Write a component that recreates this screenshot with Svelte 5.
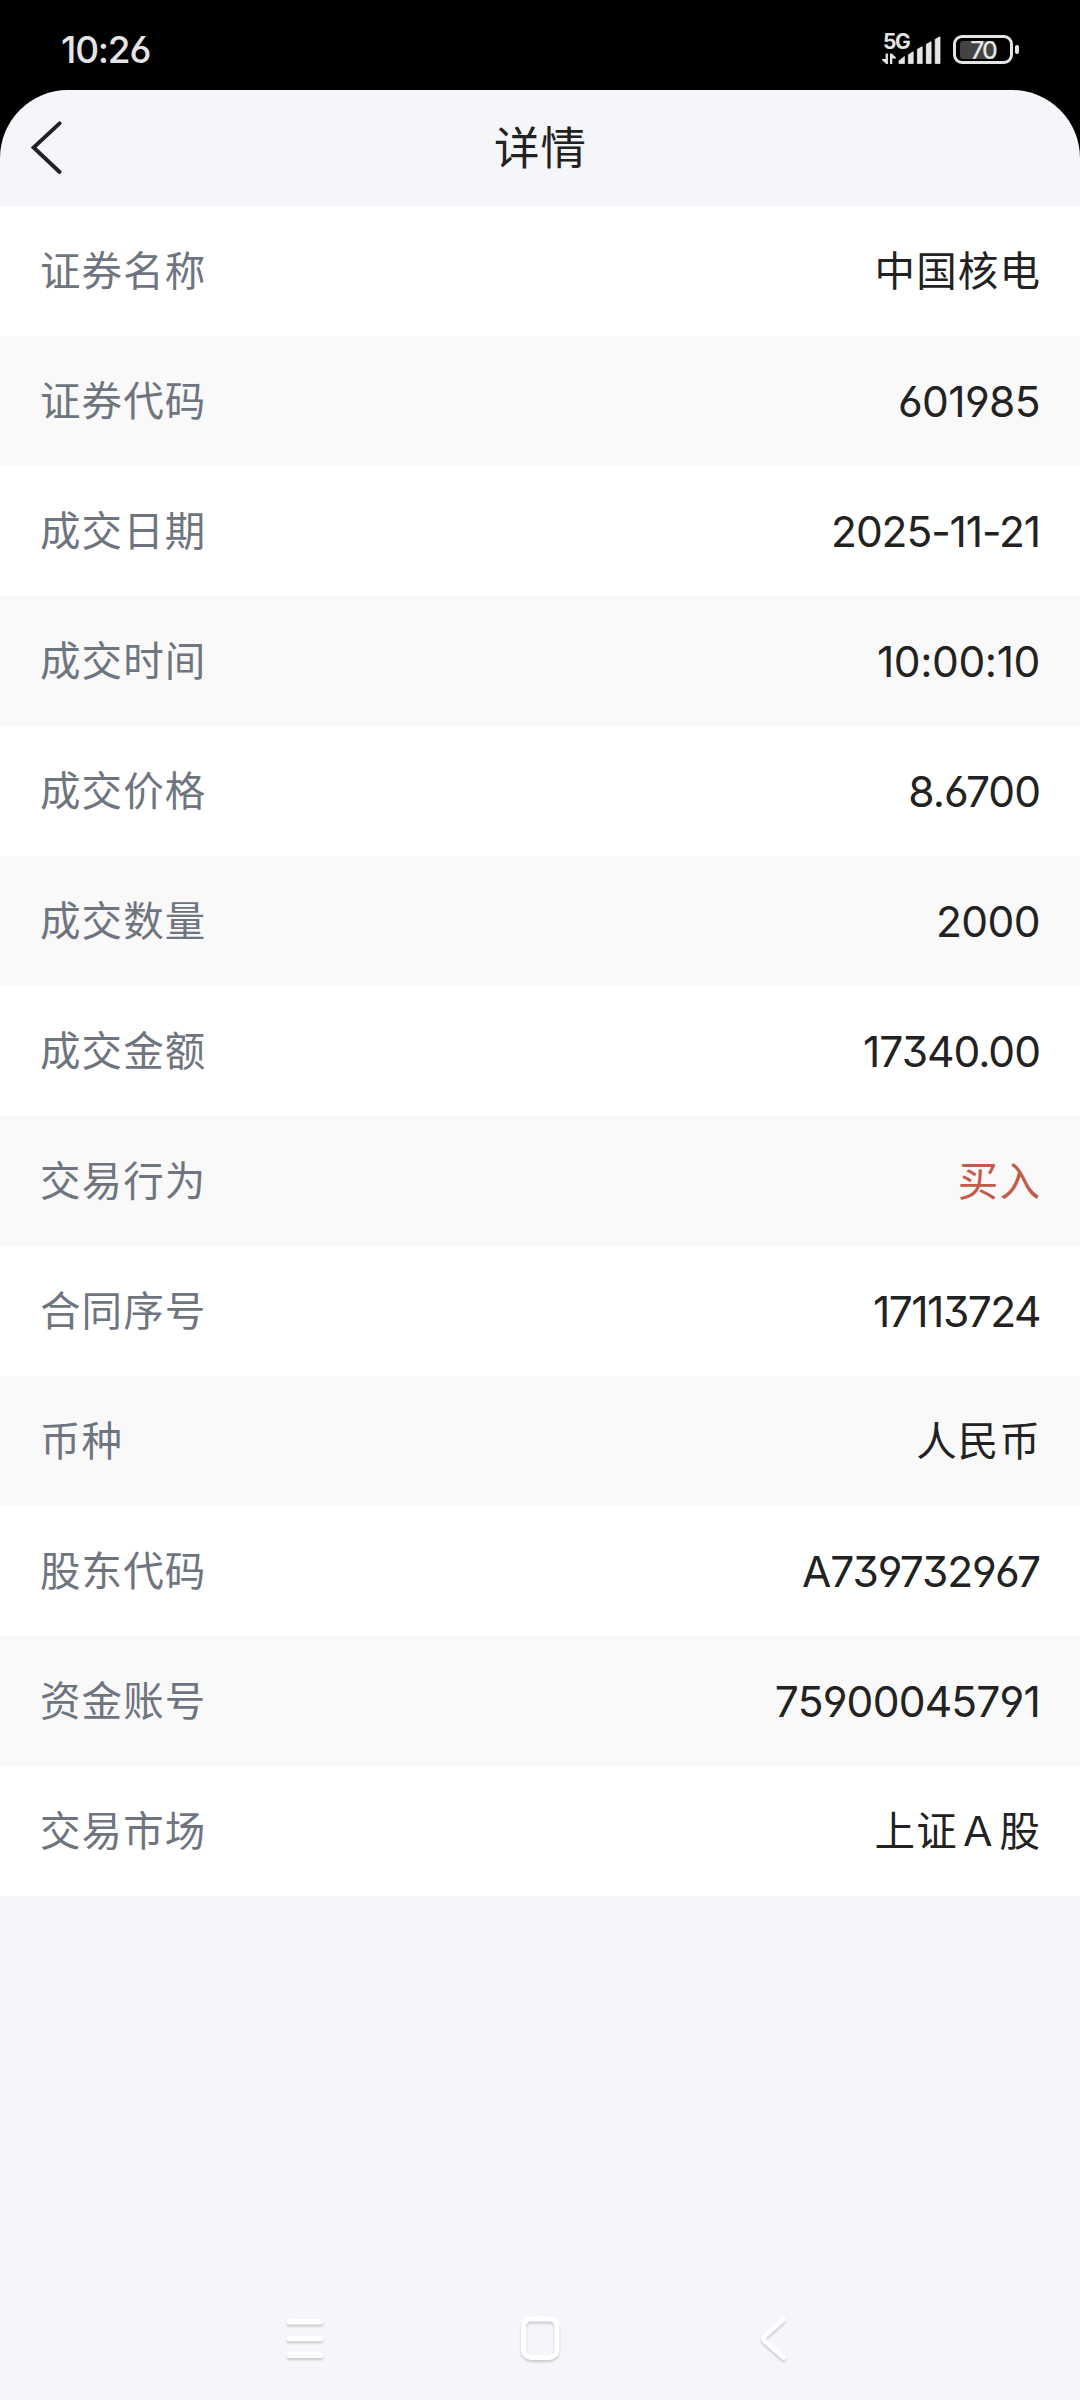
<script>
    const time = '10:26';
    const battery = 70;

    // spacing: letter spacing in px, numbers only
    const rows = [
        { label: '证券名称', value: '中国核电' },
        { label: '证券代码', value: '601985', spacing: -0.6 },
        { label: '成交日期', value: '2025-11-21', spacing: -1.1 },
        { label: '成交时间', value: '10:00:10', spacing: -0.4 },
        { label: '成交价格', value: '8.6700', spacing: -1 },
        { label: '成交数量', value: '2000', spacing: -0.6 },
        { label: '成交金额', value: '17340.00', spacing: -1 },
        { label: '交易行为', value: '买入', highlight: true },
        { label: '合同序号', value: '17113724', spacing: -1.5 },
        { label: '币种', value: '人民币' },
        { label: '股东代码', value: 'A739732967', spacing: -1.1 },
        { label: '资金账号', value: '75900045791', spacing: -0.8 },
        { label: '交易市场', value: '上证\uFF21股' }, // full-width A
    ];
</script>

<div class="screen">
    <div class="status-bar">
        <span class="time">{time}</span>
        <div class="status-icons">
            <div class="signal">
                <span class="network">5G</span>
                <svg width="60" height="30" viewBox="0 0 60 30" fill="#e4e4e4">
                    <!-- data arrows -->
                    <path d="M3.6 18.5h2.3V29H4.2L0 25v-1h3.6z" />
                    <path d="M8 18.5h1.8l4.2 4v1h-3.7V29H8z" />
                    <path d="M17 28.5v-2.6l5.4-4.5V28.5z" stroke="#e4e4e4" stroke-width=".8" stroke-linejoin="round" />
                    <path d="M26.4 28.5v-8.7l4.8-3V28.5z" stroke="#e4e4e4" stroke-width=".8" stroke-linejoin="round" />
                    <path d="M35.4 28.5V14.3l4.8-2.6V28.5z" stroke="#e4e4e4" stroke-width=".8" stroke-linejoin="round" />
                    <path d="M44.3 28.5V9.3l4.8-2.6V28.5z" stroke="#e4e4e4" stroke-width=".8" stroke-linejoin="round" />
                    <path d="M53.2 28.5V4.3l4.8-2.6V28.5z" stroke="#e4e4e4" stroke-width=".8" stroke-linejoin="round" />
                </svg>
            </div>
            <div class="battery">
                <div class="battery-level" style="width: {battery * 0.49}px"></div>
                <span class="battery-text">{battery}</span>
            </div>
            <div class="battery-tip"></div>
        </div>
    </div>

    <div class="page">
        <header class="header">
            <button class="back" aria-label="返回">
                <svg width="34" height="56" viewBox="0 0 34 56" fill="none">
                    <path d="M29.6 3.4L3.6 27.5L29.6 52" stroke="#222" stroke-width="3.9" stroke-linecap="round" />
                </svg>
            </button>
            <h1>详情</h1>
        </header>

        <div class="list">
            {#each rows as row}
                <div class="row">
                    <span class="label">{row.label}</span>
                    {#if row.spacing}
                        <span class="value number" style="letter-spacing: {row.spacing}px">{row.value}</span>
                    {:else}
                        <span class="value" class:highlight={row.highlight}>{row.value}</span>
                    {/if}
                </div>
            {/each}
        </div>

        <nav class="nav-bar">
            <svg width="48" height="56" viewBox="0 0 48 56" stroke="#fff" stroke-width="5.6" stroke-linecap="round">
                <path d="M8.5 9.7h31M8.5 26.5h31M8.5 43.2h31" />
            </svg>
            <svg width="48" height="56" viewBox="0 0 48 56" fill="none" stroke="#fff" stroke-width="5">
                <rect x="7.5" y="7" width="33.5" height="38.5" rx="7.5" />
            </svg>
            <svg width="48" height="56" viewBox="0 0 48 56" fill="none" stroke="#fff" stroke-width="4.8" stroke-linecap="round">
                <path d="M32.5 7.5L14.5 23.3Q11 26.5 14.5 29.8L32.5 45.5" />
            </svg>
        </nav>
    </div>
</div>

<style>
    :global(body) {
        margin: 0;
        background: #000;
    }

    .screen {
        width: 1080px;
        height: 2400px;
        display: flex;
        flex-direction: column;
        overflow: hidden;
        background: #000;
        font-family: Inter, "Noto Sans CJK SC", sans-serif;
    }

    .status-bar {
        height: 90px;
        flex: none;
        display: flex;
        justify-content: space-between;
        align-items: center;
        box-sizing: border-box;
        padding: 9px 61px 0;
        color: #e4e4e4;
    }

    .time {
        font-size: 37px;
        font-weight: 550;
        line-height: 1;
        letter-spacing: -1.2px;
        font-feature-settings: "cv03", "cv04";
    }

    .status-icons {
        display: flex;
        align-items: center;
    }

    .signal {
        position: relative;
        width: 60px;
        height: 30px;
        margin-right: 11px;
    }

    .signal svg {
        display: block;
    }

    .network {
        position: absolute;
        left: 1px;
        top: -5px;
        font-size: 21px;
        font-weight: 700;
        line-height: 24px;
        letter-spacing: -1.4px;
    }

    .battery {
        position: relative;
        width: 60px;
        height: 29px;
        box-sizing: border-box;
        border: 3px solid #e4e4e4;
        border-radius: 9px;
        padding: 2.5px 4px;
    }

    .battery-level {
        height: 18px;
        border-radius: 3px 0 0 3px;
        background: #434343;
    }

    .battery-text {
        position: absolute;
        inset: 0;
        text-align: center;
        font-size: 24.5px;
        font-weight: 500;
        line-height: 24px;
        letter-spacing: -2px;
    }

    .battery-tip {
        width: 4px;
        height: 9px;
        margin-left: 2px;
        border-radius: 2px;
        background: #e4e4e4;
    }

    .page {
        flex: 1;
        display: flex;
        flex-direction: column;
        background: #f4f6fa;
        border-radius: 68px 68px 0 0;
    }

    .header {
        height: 116px;
        flex: none;
        display: grid;
        grid-template-columns: 100px 1fr 100px;
        align-items: center;
    }

    .back {
        display: flex;
        margin: 0;
        padding: 0 0 0 30px;
        border: none;
        background: none;
    }

    h1 {
        margin: 0;
        padding: 2px 0 0 1px;
        text-align: center;
        font-size: 45.5px;
        font-weight: 400;
        line-height: 1;
        letter-spacing: 1px;
        color: #222;
    }

    .row {
        height: 130px;
        box-sizing: border-box;
        padding: 2px 40px 0;
        display: flex;
        justify-content: space-between;
        align-items: center;
        background: #fff;
        font-size: 40.5px;
        line-height: 60px;
        letter-spacing: 1.1px;
    }

    .row:nth-child(even) {
        background: #f9f9f9;
    }

    .label {
        color: #6e757f;
    }

    .value {
        color: #222;
        margin-right: -1px;
    }

    .number {
        font-size: 42.5px;
        margin-right: 0;
        font-feature-settings: "cv03", "cv04", "cv09";
    }

    .highlight {
        color: #c45a49;
    }

    .nav-bar {
        display: flex;
        justify-content: center;
        gap: 187px;
        margin-top: auto;
        padding-bottom: 24px;
        height: 64px;
    }

    .nav-bar svg {
        filter: drop-shadow(0 2px 1px rgba(0, 0, 0, 0.18));
    }
</style>
